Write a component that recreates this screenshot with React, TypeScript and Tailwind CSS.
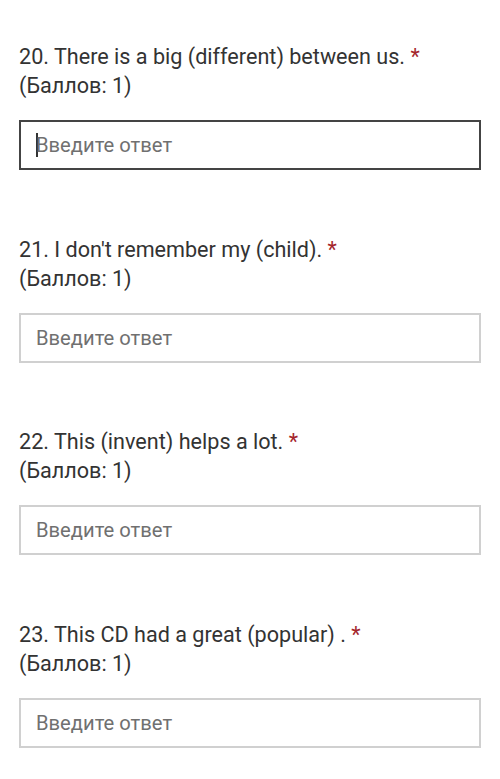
import { useState } from 'react';

interface Question {
    num: number;
    text: string;
}

const questions: Question[] = [
    { num: 20, text: 'There is a big (different) between us.' },
    { num: 21, text: "I don't remember my (child)." },
    { num: 22, text: 'This (invent) helps a lot.' },
    { num: 23, text: 'This CD had a great (popular) .' },
];

function QuestionBlock({ q, focused }: { q: Question; focused: boolean }) {
    const [value, setValue] = useState('');

    return (
        <div className="flex flex-col">
            <div className="text-[21.6px] leading-[29px] text-[#333333]">
                <span>
                    {q.num}. {q.text}
                </span>{' '}
                <span className="text-[#a4262c]">*</span>
                <div>(Баллов: 1)</div>
            </div>
            <div
                className={`mt-[20px] h-[50px] flex items-center px-[15px] bg-white ${
                    focused ? 'border-2 border-[#444444]' : 'border-2 border-[#d0d0d0]'
                }`}
            >
                {focused && value === '' && <span className="w-[2px] h-[24px] bg-[#333333] -mr-[2px]" />}
                <input
                    value={value}
                    onChange={(e) => setValue(e.target.value)}
                    placeholder="Введите ответ"
                    className="w-full bg-transparent outline-none text-[20.2px] text-[#333333] placeholder:text-[#707070]"
                />
            </div>
        </div>
    );
}

export default function App() {
    return (
        <div
            className="w-[500px] min-h-[779px] bg-white pt-[42px] px-[19px] flex flex-col gap-[64.67px]"
            style={{ fontFamily: 'Roboto, "Noto Sans", sans-serif' }}
        >
            {questions.map((q, i) => (
                <QuestionBlock key={q.num} q={q} focused={i === 0} />
            ))}
        </div>
    );
}
